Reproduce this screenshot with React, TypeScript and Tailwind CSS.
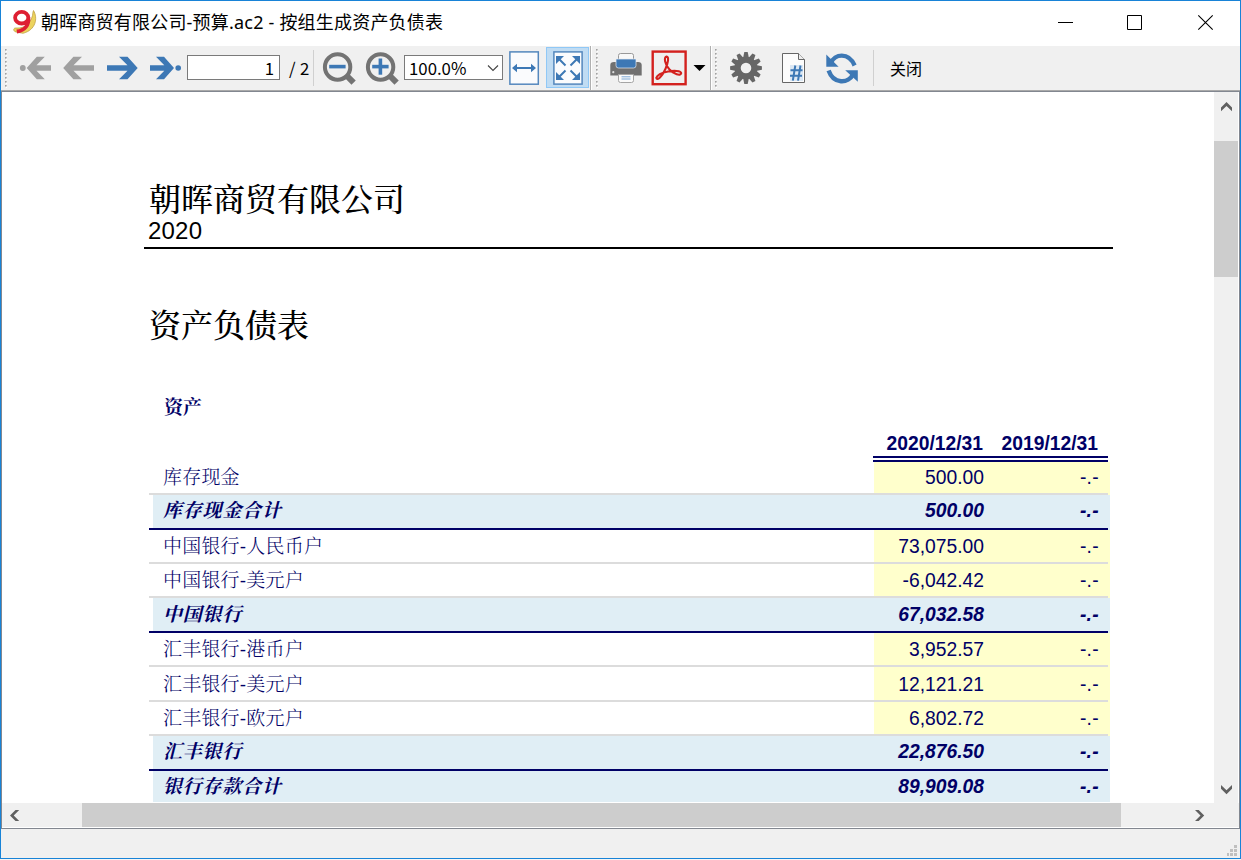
import React from "react";

type Row = { label: string; a: string; kind: "item" | "total"; h: string; nudge: string; cut?: boolean };

const rows: Row[] = [
  { label: "库存现金", a: "500.00", kind: "item", h: "h-[33px]", nudge: "pt-[2px]" },
  { label: "库存现金合计", a: "500.00", kind: "total", h: "h-[35px]", nudge: "pt-0" },
  { label: "中国银行-人民币户", a: "73,075.00", kind: "item", h: "h-[34px]", nudge: "pt-[2px]" },
  { label: "中国银行-美元户", a: "-6,042.42", kind: "item", h: "h-[34px]", nudge: "pt-[2px]" },
  { label: "中国银行", a: "67,032.58", kind: "total", h: "h-[35px]", nudge: "pt-[2px]" },
  { label: "汇丰银行-港币户", a: "3,952.57", kind: "item", h: "h-[34px]", nudge: "pt-[2px]" },
  { label: "汇丰银行-美元户", a: "12,121.21", kind: "item", h: "h-[35px]", nudge: "pt-[3px]" },
  { label: "汇丰银行-欧元户", a: "6,802.72", kind: "item", h: "h-[34px]", nudge: "pt-[2px]" },
  { label: "汇丰银行", a: "22,876.50", kind: "total", h: "h-[35px]", nudge: "pt-0" },
  { label: "银行存款合计", a: "89,909.08", kind: "total", h: "h-[31px]", nudge: "pt-[2px]", cut: true },
];

const serif = "font-['Liberation_Sans','Noto_Serif_CJK_SC','Noto_Sans_CJK_SC',serif]";
const ui = "font-['Noto_Sans','Noto_Sans_CJK_SC',sans-serif]";
const uiCjk = "font-['Noto_Sans_CJK_SC',sans-serif]";

function Logo() {
  return (
    <svg className="ml-[10px] mt-[7px] h-7 w-[26px] shrink-0" viewBox="11 8 26 28">
      <path d="M33.5 10.5C38 18 36 30 23 33.3L16 32C12.5 31 13.5 27.5 16 28C25 29 32.5 22 33 12Z" fill="#ecd35e" stroke="#b9983a" strokeWidth=".7" />
      <path d="M21.7 11.9a6.6 5.8 0 1 0 0 11.6a6.6 5.8 0 1 0 0-11.6ZM28.4 17.2C29.2 25 25 30.2 16.8 31.5" fill="none" stroke="#de1f32" strokeWidth="3.8" />
    </svg>
  );
}

function Grip() {
  return (
    <svg className="h-11 w-1 shrink-0" viewBox="0 0 4 44">
      {Array.from({ length: 10 }, (_, i) => (
        <g key={i}>
          <rect x="2" y={4 + i * 4} width="1" height="2" fill="#fff" />
          <rect x="1" y={3 + i * 4} width="1.6" height="1.6" fill="#a0a0a0" />
        </g>
      ))}
    </svg>
  );
}

function NavArrows() {
  return (
    <svg className="h-11 w-[181px] shrink-0" viewBox="5 46 181 44">
      <g fill="#a0a0a0">
        <circle cx="22.8" cy="68" r="2.9" />
        <path d="M26.7 68 36.8 56.8H44.8L36.5 65.3H51V70.8H36.5L44.8 79.3H36.8Z" />
        <path d="M63.2 68 73.4 56.8H82L73.5 65.3H94V70.8H73.5L82 79.3H73.4Z" />
      </g>
      <g fill="#3d78b5">
        <path d="M137.7 68 127.5 56.8H119L127.5 65.3H107V70.8H127.5L119 79.3H127.5Z" />
        <path d="M174 68 164 56.8H156L164.3 65.3H150V70.8H164.3L156 79.3H164Z" />
        <circle cx="178.2" cy="68" r="2.8" />
      </g>
    </svg>
  );
}

function Magnifier({ plus }: { plus?: boolean }) {
  return (
    <svg className="h-11 w-[34px] shrink-0" viewBox="322 46 34 44">
      <path d="M345.5 74.5 353.6 82.7" stroke="#737373" strokeWidth="6" />
      <circle cx="337.6" cy="67" r="12.7" fill="#f0f0f0" stroke="#737373" strokeWidth="4" />
      <path d="M329.2 66.6h16.4" stroke="#3d78b5" strokeWidth="3.6" />
      {plus && <path d="M337.4 58.5v16.2" stroke="#3d78b5" strokeWidth="3.6" />}
    </svg>
  );
}

function FitWidth() {
  return (
    <svg className="ml-[5px] h-11 w-8 shrink-0" viewBox="508 46 32 44">
      <rect x="509.9" y="51.9" width="28.4" height="32.3" fill="#fafbfd" stroke="#5487bd" strokeWidth="1.5" />
      <path d="M515 68h18" stroke="#3d78b5" strokeWidth="2" />
      <path d="M512 68 517 63.8V72.2ZM536 68 531 63.8V72.2Z" fill="#3d78b5" />
    </svg>
  );
}

function FitPage() {
  return (
    <div className="ml-[6px] mt-px h-[41px] w-[43px] shrink-0 border border-[#90c8f6] bg-[#c0dcf3]">
      <svg className="h-[39px] w-[41px]" viewBox="547 48 41 39">
        <rect x="553.9" y="51.9" width="28.2" height="32.2" fill="#fafbfd" stroke="#5487bd" strokeWidth="1.5" />
        <g stroke="#3d78b5" strokeWidth="2">
          <path d="M559 59 565.5 65.5M577 59 570.5 65.5M559 77 565.5 70.5M577 77 570.5 70.5" />
        </g>
        <path d="M556 56h8l-8 8ZM580 56h-8l8 8ZM556 80h8l-8-8ZM580 80h-8l8-8Z" fill="#3d78b5" />
      </svg>
    </div>
  );
}

function Printer() {
  return (
    <svg className="ml-[11px] h-11 w-8 shrink-0" viewBox="610 46 32 44">
      <path d="M618.5 61V55.5Q618.5 53.5 620.5 53.5H631.5Q633.5 53.5 633.5 55.5V61Z" fill="#f8f8f8" stroke="#999" />
      <path d="M614 62H638Q641.7 62 641.7 65V75.5H610.3V65Q610.3 62 614 62Z" fill="#707070" />
      <path d="M616 59H636V65.5Q636 68 633.5 68H618.5Q616 68 616 65.5Z" fill="#3d78b5" stroke="#e9edf2" strokeWidth=".7" />
      <circle cx="613.3" cy="72.2" r="1.1" fill="#ddd" />
      <path d="M618.5 74.5H633.5V80.5Q633.5 82.5 631.5 82.5H620.5Q618.5 82.5 618.5 80.5Z" fill="#fafafa" stroke="#a5a5a5" />
      <path d="M621.5 76.8h9M621.5 79h9" stroke="#7ba6d3" />
    </svg>
  );
}

function Pdf() {
  return (
    <svg className="ml-[9px] h-11 w-[37px] shrink-0" viewBox="651 46 37 44">
      <rect x="652.7" y="51.6" width="32.9" height="32.6" fill="#efefef" stroke="#d3211e" strokeWidth="2.4" />
      <path d="M656.3 77.8C657.5 74.5 663 72.5 668 71.5C673.5 70.5 681 70.5 681.2 73.2C680.8 76.5 673.5 74 669.5 69.5C664.5 64.5 663.8 57 666.4 56.6C669.4 56.3 668 63.5 665.3 69.3C662.3 76 657 81.5 656.3 77.8Z" fill="none" stroke="#d3211e" strokeWidth="2.1" />
    </svg>
  );
}

function Gear() {
  return (
    <svg className="ml-[12px] h-11 w-8 shrink-0" viewBox="-16 -22 32 44">
      <g fill="#666">
        {Array.from({ length: 12 }, (_, i) => (
          <path key={i} d="M-2.9-10-1.7-15.9H1.7L2.9-10Z" transform={`rotate(${i * 30})`} />
        ))}
      </g>
      <circle r="8.3" fill="none" stroke="#666" strokeWidth="6" />
    </svg>
  );
}

function PageNumber() {
  return (
    <svg className="ml-[19px] h-11 w-6 shrink-0" viewBox="781 46 24 44">
      <path d="M782.5 53.5H798.5L804.5 59.5V82.5H782.5Z" fill="#fcfcfc" stroke="#666" />
      <path d="M798.5 53.5V59.5H804.5" fill="#eee" stroke="#666" />
      <path d="M790 65H803V81H790Z" fill="#dce8f4" />
      <path d="M795.3 65.5 792.8 80.7M800.5 65.5 798 80.7M790.5 70.3H802.5M790 75.7H802" stroke="#3d78b5" strokeWidth="2" />
    </svg>
  );
}

function Refresh() {
  return (
    <svg className="ml-[20px] h-11 w-[34px] shrink-0" viewBox="825 46 34 44">
      <g fill="none" stroke="#3d78b5" strokeWidth="4.4">
        <path d="M831 63C834.5 54 848.5 51.5 854.6 65.5" />
        <path d="M828.6 70.5C833.5 84.5 848.5 84 853.2 74" />
      </g>
      <path d="M826.3 54.5V66.7H838.6ZM857.8 81.8V70.2H845.2Z" fill="#3d78b5" />
    </svg>
  );
}

function Chevron({ dir }: { dir: "up" | "down" | "left" | "right" }) {
  const d = {
    up: "M0 9.2V5.5L5.5 0 11 5.5V9.2L5.5 3.9Z",
    down: "M0 0V3.7L5.5 9.2 11 3.7V0L5.5 5.3Z",
    left: "M9.2 0H5.5L0 5.5 5.5 11H9.2L3.7 5.5Z",
    right: "M0 0H3.7L9.2 5.5 3.7 11H0L5.5 5.5Z",
  }[dir];
  return (
    <svg className="h-[11px] w-[11px] shrink-0" viewBox="0 0 11 11">
      <path d={d} fill="#606060" />
    </svg>
  );
}

function TitleBar() {
  return (
    <div className="flex h-[45px] shrink-0 bg-white">
      <Logo />
      <div className={`${ui} ml-1 mt-[7px] h-7 flex-1 whitespace-nowrap text-[18px] leading-7 tracking-[0.2px] text-black`}>
        朝晖商贸有限公司-预算.ac2 - 按组生成资产负债表
      </div>
      <svg className="h-[45px] w-[170px] shrink-0" viewBox="1050 1 170 45" fill="none" stroke="#000">
        <path d="M1058 22.5h15" />
        <path d="M1127.5 15.5h14v14h-14Z" />
        <path d="M1198.3 15.3l14.4 14.4M1212.7 15.3l-14.4 14.4" strokeWidth="1.1" />
      </svg>
      <div className="w-5" />
    </div>
  );
}

function Toolbar() {
  return (
    <div className={`${uiCjk} flex h-[44px] shrink-0 items-start bg-[#f0f0f0] text-[16.8px] text-black`}>
      <div className="w-[3px]" />
      <Grip />
      <div className="-ml-[3px]"><NavArrows /></div>
      <div className="ml-px mt-[9px] h-[25px] w-[93px] shrink-0 border border-[#7a7a7a] bg-white pr-[5px] text-right leading-[24px]">1</div>
      <div className="ml-[9px] mt-[9px] w-[24px] shrink-0 whitespace-nowrap leading-[26px] tracking-[0.3px]">/ 2</div>
      <div className="mt-1 h-9 w-px shrink-0 bg-[#d0d0d0]" />
      <div className="w-2 shrink-0" />
      <Magnifier />
      <div className="w-[9px] shrink-0" />
      <Magnifier plus />
      <div className="ml-[5px] mt-[9px] flex h-[25px] w-[99px] shrink-0 items-center justify-between border border-[#7a7a7a] bg-white pl-1 pr-[3px] leading-[24px]">
        <span>100.0%</span>
        <svg className="h-3 w-3" viewBox="0 0 12 12"><path d="M1 3.5 6 8.5 11 3.5" fill="none" stroke="#444" strokeWidth="1.1" /></svg>
      </div>
      <FitWidth />
      <FitPage />
      <div className="ml-px h-11 w-px shrink-0 bg-[#b0b0b0]" />
      <div className="h-11 w-px shrink-0 bg-white" />
      <div className="w-[3px] shrink-0" />
      <Grip />
      <Printer />
      <Pdf />
      <svg className="ml-[5px] h-11 w-[13px] shrink-0" viewBox="693 46 13 44"><path d="M693.5 65H705.5L699.5 71Z" fill="#000" /></svg>
      <div className="ml-[4px] h-11 w-px shrink-0 bg-[#b0b0b0]" />
      <div className="h-11 w-px shrink-0 bg-white" />
      <div className="w-[2px] shrink-0" />
      <Grip />
      <Gear />
      <PageNumber />
      <Refresh />
      <div className="ml-[14px] mt-1 h-9 w-px shrink-0 bg-[#d0d0d0]" />
      <div className="ml-[16px] mt-[9px] shrink-0 text-[16px] leading-[26px]">关闭</div>
    </div>
  );
}

function TableRow({ row }: { row: Row }) {
  const total = row.kind === "total";
  const fill = total ? "bg-[#e0eef5]" : "bg-[#ffffcc]";
  return (
    <div className={`${row.h} flex w-[961px] shrink-0 flex-col ${total ? "font-bold italic" : ""}`}>
      <div className="ml-1 flex min-h-0 flex-1 items-center">
        <div className={`${row.nudge} flex h-full w-[721px] items-center pl-[10px] text-[19px] whitespace-nowrap ${total ? "bg-[#e0eef5] tracking-[0.8px]" : "font-light tracking-[0.2px]"}`}>
          {row.label}
        </div>
        <div className={`${row.nudge} flex h-full flex-1 items-center text-[19.3px] ${fill}`}>
          <div className="w-[110px] text-right">{row.a}</div>
          <div className="w-[115px] text-right tracking-[0.3px]">-.-</div>
        </div>
      </div>
      {!row.cut && (
        <div className="flex h-[2px] shrink-0">
          <div className={`w-[959px] ${total ? "bg-[#000066]" : "bg-[#dcdcdc]"}`} />
          <div className={`w-[2px] ${fill}`} />
        </div>
      )}
    </div>
  );
}

function Report() {
  return (
    <div className={`${serif} flex h-[711px] w-[1212px] shrink-0 flex-col overflow-hidden bg-white text-black`}>
      <div className="ml-[147px] mt-[88px] h-10 whitespace-nowrap text-[32px] font-medium leading-10">朝晖商贸有限公司</div>
      <div className="ml-[146px] h-[26px] text-[24px] leading-[22px] tracking-[0.2px]">2020</div>
      <div className="ml-[142px] mt-px h-[2px] w-[969px] shrink-0 bg-black" />
      <div className="ml-[147px] mt-[57px] h-10 shrink-0 whitespace-nowrap text-[32px] font-medium leading-10">资产负债表</div>
      <div className="flex flex-col text-[#000066]">
        <div className="ml-[162px] mt-[48px] h-7 text-[19px] font-bold leading-7">资产</div>
        <div className="ml-[871px] mt-[9px] flex h-[25px] w-[235px] text-[19.3px] font-bold leading-[26px]">
          <div className="w-[110px] text-right">2020/12/31</div>
          <div className="w-[115px] text-right">2019/12/31</div>
        </div>
        <div className="ml-[871px] h-[6px] w-[235px] border-y-2 border-[#000066]" />
        <div className="ml-[147px] flex flex-col">
          {rows.map((r) => <TableRow key={r.label} row={r} />)}
        </div>
      </div>
    </div>
  );
}

export default function App() {
  return (
    <div className="h-[860px] w-[1241px] overflow-hidden bg-[#f5f5f5]">
      <div className="flex h-[859px] w-[1241px] flex-col border border-[#1883d7] bg-[#f0f0f0]">
        <TitleBar />
        <Toolbar />
        <div className="h-px shrink-0 bg-[#a9a9a9]" />
        <div className="flex h-[738px] shrink-0 flex-col border border-[#828790] bg-[#f0f0f0]">
          <div className="flex h-[711px]">
            <Report />
            <div className="flex w-6 flex-col items-center bg-[#f0f0f0]">
              <div className="flex h-[49px] w-6 justify-center pt-[10px]"><Chevron dir="up" /></div>
              <div className="h-[136px] w-6 bg-[#cdcdcd]" />
              <div className="flex-1" />
              <div className="flex h-[26px] w-6 justify-center pt-[8px]"><Chevron dir="down" /></div>
            </div>
            <div className="w-px bg-white" />
          </div>
          <div className="flex h-6">
            <div className="flex w-20 items-center pl-2"><Chevron dir="left" /></div>
            <div className="w-[1039px] bg-[#cdcdcd]" />
            <div className="flex w-[93px] items-center justify-end pr-[8px]"><Chevron dir="right" /></div>
          </div>
          <div className="h-px bg-white" />
        </div>
        <div className="flex h-[29px] items-end justify-end pb-[2px] pr-[2px]">
          <svg className="h-[11px] w-[11px]" viewBox="0 0 11 11" fill="#bfbfbf">
            <path d="M7 0h3v3H7ZM7 4h3v3H7ZM7 8h3v3H7ZM3 4h3v3H3ZM3 8h3v3H3ZM0 8h2v3H0Z" />
          </svg>
        </div>
      </div>
    </div>
  );
}
